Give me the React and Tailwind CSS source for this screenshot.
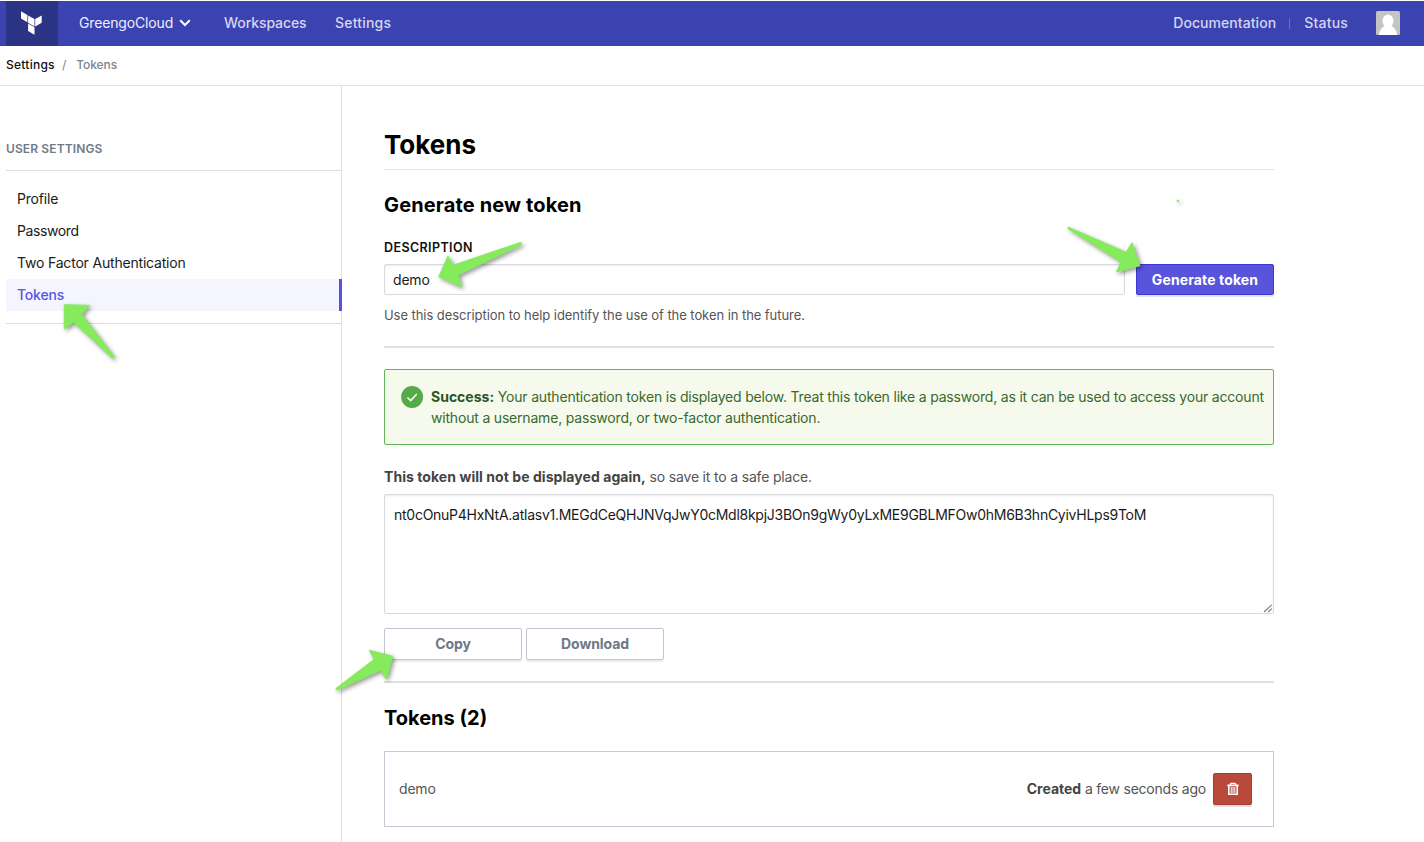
import React from "react";

const ARROWS = [
  "M64.3 304.7 L89.3 305.4 L81.7 314.3 L114.3 356.8 L112.5 358.2 L73.7 322.3 L64.3 329 Z",
  "M438.7 276.7 L448 256 L453 265.3 L520.7 242.4 L521.5 244.6 L458.3 275 L461.3 287 Z",
  "M1067.8 227 L1068.3 229 L1121 262 L1116.3 272 L1140 265.7 L1132 242.7 L1126 252.3 Z",
  "M335.8 688.5 L336.8 690.3 L380.3 670.3 L386.3 679 L392.7 656.3 L369.3 650.3 L374.3 659.3 Z",
];

function Logo() {
  return (
    <svg className="mb-px" width="24" height="26" viewBox="0 0 24 26" fill="#fff">
      <path d="M1 1.3 L7.4 5 V12.2 L1 8.5 Z" />
      <path d="M8.1 5.4 L14.5 9.1 V16.4 L8.1 12.7 Z" />
      <path d="M15.2 9.1 L21.7 5.4 V12.7 L15.2 16.4 Z" />
      <path d="M8.1 13.5 L14.5 17.2 V24.8 L8.1 21 Z" />
    </svg>
  );
}

function Header() {
  return (
    <header className="mt-px flex h-[45px] items-center bg-[#3b43b1] pl-[6px] pr-6 text-[14px] font-medium text-[#d5d6ee]">
      <div className="flex h-full w-[52px] items-center justify-center bg-[#2b3384]">
        <Logo />
      </div>
      <span className="mb-[2px] ml-[21px] w-[94px] font-normal tracking-[-0.15px] text-[#eeeefa]">GreengoCloud</span>
      <svg className="mb-[2px] ml-[6px]" width="12" height="8" viewBox="0 0 12 8" fill="none" stroke="#fff" strokeWidth="2">
        <path d="M1.2 1.3 L6 6 L10.8 1.3" />
      </svg>
      <span className="mb-[2px] ml-[33px] w-[83px] tracking-[-0.08px]">Workspaces</span>
      <span className="mb-[2px] ml-[28px] tracking-[0.2px]">Settings</span>
      <span className="mb-[2px] ml-auto tracking-[0.07px]">Documentation</span>
      <span className="mb-px ml-[13px] h-[11px] w-px bg-[#6a70c6]" />
      <span className="mb-[2px] ml-[14px] tracking-[0.2px]">Status</span>
      <svg className="mb-px ml-7" width="24" height="24" viewBox="0 0 24 24">
        <rect width="24" height="24" rx="1.5" fill="#c4c4c4" />
        <ellipse cx="12" cy="10" rx="5.6" ry="6.4" fill="#fff" />
        <path d="M3 24 C3.3 18.6 6.5 15.5 9.3 15 H14.7 C17.5 15.5 20.7 18.6 21 24 Z" fill="#fff" />
      </svg>
    </header>
  );
}

function Sidebar() {
  return (
    <aside className="flex w-[342px] shrink-0 flex-col border-r border-[#dfe0e2] pl-[6px]">
      <h2 className="mt-[53px] h-[32px] border-b border-[#dcdddf] text-[12px] font-semibold leading-5 tracking-[0.12px] text-[#6f7a88]">
        USER SETTINGS
      </h2>
      <nav className="mt-[12px] flex flex-col text-[14px] tracking-[-0.19px] text-[#1a1a1a]">
        <a className="h-8 pl-[11px] leading-8">Profile</a>
        <a className="h-8 pl-[11px] leading-8 tracking-[-0.4px]">Password</a>
        <a className="h-8 pl-[11px] leading-8">Two Factor Authentication</a>
        <a className="-mr-px h-8 border-r-[3px] border-[#5551dd] bg-[#f4f5fe] pl-[11px] font-medium leading-8 text-[#5855e0]">
          Tokens
        </a>
      </nav>
      <div className="mt-3 h-px bg-[#dcdddf]" />
    </aside>
  );
}

function Content() {
  return (
    <main className="ml-[42px] flex w-[890px] flex-col whitespace-nowrap text-[14px] tracking-[-0.18px] text-[#555]">
      <h1 className="mt-[40px] h-[44px] border-b border-[#e2e2e4] text-[26px] font-bold leading-[38px] tracking-[0px] text-black">Tokens</h1>
      <h2 className="mt-[20px] text-[20px] font-bold leading-[30px] tracking-[0.13px] text-black">Generate new token</h2>
      <label className="mt-[17px] text-[12.5px] font-semibold leading-[21px] tracking-[0.4px] text-[#111]">DESCRIPTION</label>
      <div className="mt-[6px] flex h-[31px] justify-between">
        <div className="w-[741px] rounded-[2px] border border-[#d8dade] pl-2 leading-[30px] text-[#1a1a1a] shadow-[inset_0_1px_2px_rgba(0,0,0,0.08)]">demo</div>
        <button className="w-[138px] rounded-[2px] border border-[#3f38d8] bg-[#5954dc] font-bold leading-[29px] tracking-[0.12px] text-white shadow-[0_2px_1px_rgba(0,0,0,0.12)]">
          Generate token
        </button>
      </div>
      <p className="mt-[10px] text-[13px] leading-5 tracking-[-0.06px]">Use this description to help identify the use of the token in the future.</p>
      <div className="mt-[21px] h-[2px] bg-[#dfe0e2]" />
      <section className="mt-[21px] flex h-[76px] rounded-[2px] border border-[#63b55b] bg-[#f6faec] pl-4 text-[#38692f]">
        <svg className="mt-4 shrink-0" width="23" height="23" viewBox="0 0 23 23">
          <circle cx="11.1" cy="11" r="11" fill="#55ab48" />
          <path d="M6.4 11.5 L9.7 14.6 L15.8 8" fill="none" stroke="#fff" strokeWidth="1.5" />
        </svg>
        <p className="ml-[7px] mt-4 leading-[21px] tracking-[-0.19px]">
          <strong className="font-bold tracking-[0px] text-[#27561f]">Success:</strong> Your authentication token is displayed below. Treat this token like a password, as it can be used to access your account
          <br />
          without a username, password, or two-factor authentication.
        </p>
      </section>
      <p className="mt-[22px] leading-5">
        <strong className="font-bold tracking-[0.06px] text-[#444]">This token will not be displayed again,</strong> so save it to a safe place.
      </p>
      <div className="mt-[7px] flex h-[120px] items-end justify-between rounded-[2px] border border-[#d8dade] pl-[9px] text-[#1a1a1a] shadow-[inset_0_1px_2px_rgba(0,0,0,0.08)]">
        <span className="self-start pt-[10px] leading-5 tracking-[-0.26px]">nt0cOnuP4HxNtA.atlasv1.MEGdCeQHJNVqJwY0cMdl8kpjJ3BOn9gWy0yLxME9GBLMFOw0hM6B3hnCyivHLps9ToM</span>
        <svg width="10" height="10" viewBox="0 0 10 10" stroke="#777" strokeWidth="1.1">
          <path d="M1 9 L8.8 1.8 M5.2 9 L8.8 5.6" />
        </svg>
      </div>
      <div className="mt-[14px] flex h-8 gap-1 font-bold tracking-[-0.1px] text-[#6d7886]">
        <button className="w-[138px] rounded-[2px] border border-[#bfc5d1] leading-[30px] shadow-[0_2px_1px_rgba(0,0,0,0.08)]">Copy</button>
        <button className="w-[138px] rounded-[2px] border border-[#bfc5d1] leading-[30px] shadow-[0_2px_1px_rgba(0,0,0,0.08)]">Download</button>
      </div>
      <div className="mt-[21px] h-[2px] bg-[#dfe0e2]" />
      <h2 className="mt-[20px] text-[20px] font-bold leading-[30px] tracking-[0px] text-black">Tokens (2)</h2>
      <div className="mt-[18px] flex h-[76px] items-center border border-[#c5ccd7] pl-[14px] pr-[21px]">
        <span className="mb-[2px]">demo</span>
        <span className="mb-[2px] ml-auto tracking-[-0.22px]">
          <strong className="font-bold tracking-[0px] text-[#444]">Created</strong> a few seconds ago
        </span>
        <button className="ml-[7px] flex h-8 w-[39px] items-center justify-center rounded-[2px] border border-[#a63c30] bg-[#b94a3b] shadow-[0_2px_1px_rgba(0,0,0,0.14)]">
          <svg width="12" height="14" viewBox="0 0 12 14" fill="none" stroke="#fff">
            <path d="M0.3 3.4 H11.7" strokeWidth="1.7" />
            <path d="M3.5 3 V1.9 Q3.5 1.3 4.2 1.3 H7.8 Q8.5 1.3 8.5 1.9 V3" strokeWidth="1.3" />
            <path d="M1.8 3.8 V12.3 H10.2 V3.8" strokeWidth="1.6" />
            <path d="M4.2 5 V11 M6 5 V11 M7.8 5 V11" strokeWidth="1" />
          </svg>
        </button>
      </div>
    </main>
  );
}

export default function App() {
  return (
    <div className="relative flex h-[842px] w-[1424px] flex-col overflow-hidden bg-white font-['Inter',sans-serif]">
      <Header />
      <div className="flex h-10 shrink-0 items-center border-b border-[#e1e1e4] pb-px pl-[6px] text-[12px] font-medium text-[#7b8490]">
        <span className="w-[48px] tracking-[0.25px] text-[#111]">Settings</span>
        <span className="ml-[8px] font-normal">/</span>
        <span className="ml-[10px] tracking-[-0.1px]">Tokens</span>
      </div>
      <div className="flex flex-1">
        <Sidebar />
        <Content />
      </div>
      <svg className="pointer-events-none absolute inset-0 drop-shadow-[2px_2px_2px_rgba(0,0,0,0.4)]" width="1424" height="842" viewBox="0 0 1424 842" fill="#85eb5c" stroke="#85eb5c" strokeWidth="1" strokeLinejoin="round">
        {ARROWS.map((d) => (
          <path key={d} d={d} />
        ))}
        <circle cx="1178" cy="201" r="1" />
      </svg>
    </div>
  );
}
